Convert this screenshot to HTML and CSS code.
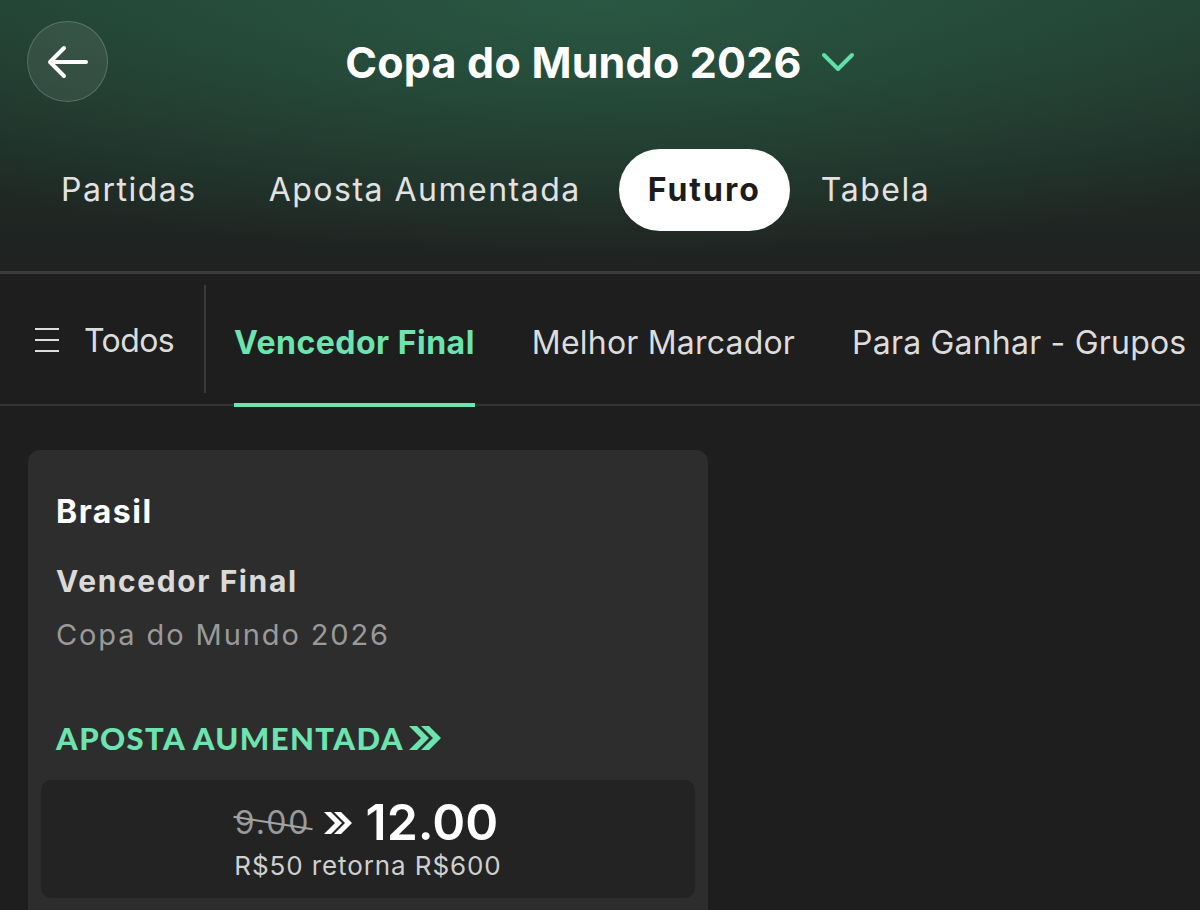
FILE: index.html
```html
<!DOCTYPE html>
<html lang="pt-BR">
<head>
    <meta charset="UTF-8">
    <meta name="viewport" content="width=device-width, initial-scale=1.0">
    <title>Copa do Mundo 2026</title>
    <link rel="stylesheet" href="styles.css">
</head>
<body>
    <header class="header">
        <div class="top-bar">
            <button class="back-btn" type="button" aria-label="Voltar">
                <svg width="42" height="36" viewBox="0 0 42 36" fill="none" stroke="#fff" stroke-width="4" stroke-linecap="round" stroke-linejoin="round">
                    <path d="M39 18H5"/>
                    <path d="M17 4L3 18l14 14"/>
                </svg>
            </button>
            <h1 class="title">
                Copa do Mundo 2026
                <svg class="title-chevron" width="34" height="22" viewBox="0 0 34 22" fill="none" stroke="#5fe0a8" stroke-width="4" stroke-linecap="round" stroke-linejoin="round">
                    <path d="M3 4l14 14L31 4"/>
                </svg>
            </h1>
        </div>
        <nav class="tabs">
            <span class="tab tab-first">Partidas</span>
            <span class="tab tab-second">Aposta Aumentada</span>
            <span class="tab active">Futuro</span>
            <span class="tab">Tabela</span>
        </nav>
    </header>

    <div class="subnav">
        <div class="subnav-all">
            <svg width="26" height="26" viewBox="0 0 26 26" fill="none" stroke="#ddd" stroke-width="2.2">
                <path d="M1 2h24M1 13h24M1 24h24"/>
            </svg>
            <span>Todos</span>
        </div>
        <div class="subnav-sep"></div>
        <span class="subnav-item active">Vencedor Final</span>
        <span class="subnav-item">Melhor Marcador</span>
        <span class="subnav-item">Para Ganhar - Grupos</span>
    </div>

    <main class="content">
        <div class="card">
            <div class="team">Brasil</div>
            <div class="market">Vencedor Final</div>
            <div class="competition">Copa do Mundo 2026</div>
            <div class="boost-label">
                APOSTA AUMENTADA
                <svg width="34" height="26" viewBox="0 0 34 26" fill="#6de4b0">
                    <path d="M1 1h8l12 12L9 25H1l12-12z"/>
                    <path d="M13 1h8l12 12-12 12h-8l12-12z"/>
                </svg>
            </div>
            <div class="price-box">
                <div class="price-line">
                    <span class="old-price">9.00</span>
                    <svg class="price-arrow" width="30" height="26" viewBox="0 0 30 26" fill="#fff">
                        <path d="M1 2h7l11 11L8 24H1l11-11z"/>
                        <path d="M11 2h7l11 11-11 11h-7l11-11z"/>
                    </svg>
                    <span class="new-price">12.00</span>
                </div>
                <div class="returns">R$50 retorna R$600</div>
            </div>
        </div>
    </main>
</body>
</html>
```

FILE: styles.css
```css
body {
    margin: 0;
    font-family: Inter, Roboto, "Noto Sans", sans-serif;
    background-color: #1e1e1e;
    color: #fff;
    overflow: hidden;
}

/* cabeçalho verde */
.header {
    background:
        radial-gradient(ellipse 900px 260px at 600px 0, rgba(42, 92, 70, 0.85), rgba(42, 92, 70, 0) 100%),
        linear-gradient(180deg, #223d31 0%, #1f2c26 60%, #1f2120 100%);
    border-bottom: 3px solid #3a3a3a;
    height: 274px;
    box-sizing: border-box;
}
.top-bar {
    position: relative;
    height: 122px;
    display: flex;
    align-items: center;
    justify-content: center;
}
.back-btn {
    position: absolute;
    left: 27px;
    top: 21px;
    width: 81px;
    height: 81px;
    border-radius: 50%;
    background-color: rgba(255, 255, 255, 0.08);
    border: 1.5px solid rgba(255, 255, 255, 0.18);
    display: flex;
    align-items: center;
    justify-content: center;
    padding: 0;
}
.title {
    margin: 0;
    font-size: 43px;
    font-weight: 700;
    display: flex;
    align-items: center;
    gap: 19px;
    letter-spacing: 0.2px;
    padding-top: 2px;
}
.tabs {
    display: flex;
    align-items: center;
    padding-left: 61px;
    margin-top: 27px;
    white-space: nowrap;
}
.tab {
    font-size: 32px;
    color: #e2e2e2;
    height: 82px;
    line-height: 82px;
    border-radius: 41px;
    letter-spacing: 1.5px;
}
.tab-first {
    margin-right: 72px;
}
.tab-second {
    margin-right: 38px;
}
.tab.active {
    background-color: #fff;
    color: #1c1c1c;
    font-weight: 700;
    padding: 0 29px;
    margin-right: 31px;
    letter-spacing: 2px;
}

/* filtros */
.subnav {
    display: flex;
    align-items: center;
    height: 132px;
    border-bottom: 2px solid #343434;
    background-color: #1e1e1e;
    box-sizing: border-box;
    white-space: nowrap;
}
.subnav-all {
    display: flex;
    align-items: center;
    flex-shrink: 0;
    gap: 24px;
    padding-left: 34px;
    font-size: 32px;
    color: #dcdcdc;
    width: 170px;
    letter-spacing: -0.6px;
    padding-top: 2px;
}
.subnav-sep {
    flex-shrink: 0;
    width: 2px;
    height: 108px;
    background-color: #3a3a3a;
    margin-right: 28px;
}
.subnav-item {
    flex-shrink: 0;
    font-size: 32px;
    color: #dcdcdc;
    height: 132px;
    line-height: 140px;
    margin-right: 57px;
    box-sizing: border-box;
    letter-spacing: 0.2px;
}
.subnav-item.active {
    color: #6de4b0;
    font-weight: 700;
    border-bottom: 4px solid #6de4b0;
    margin-bottom: -2px;
    height: 134px;
    letter-spacing: 0.5px;
}

/* cartão */
.content {
    padding: 44px 28px 0;
}
.card {
    width: 680px;
    background-color: #2d2d2d;
    border-radius: 12px;
    padding: 42px 28px 40px;
    box-sizing: border-box;
}
.team {
    font-size: 32px;
    font-weight: 700;
    line-height: 40px;
    letter-spacing: 1.5px;
}
.market {
    font-size: 30px;
    font-weight: 700;
    color: #dadada;
    line-height: 40px;
    margin-top: 29px;
    letter-spacing: 1.6px;
}
.competition {
    font-size: 29px;
    color: #9a9a9a;
    line-height: 40px;
    margin-top: 14px;
    letter-spacing: 1.9px;
}
.boost-label {
    font-family: Lato, "Open Sans", sans-serif;
    font-weight: 900;
    font-size: 31px;
    color: #6de4b0;
    line-height: 40px;
    margin-top: 63px;
    display: flex;
    align-items: center;
    gap: 4px;
    letter-spacing: 1.4px;
}
.price-box {
    margin: 22px -15px 0;
    background-color: #232323;
    border-radius: 10px;
    height: 118px;
    display: flex;
    flex-direction: column;
    align-items: center;
    padding-top: 17px;
    box-sizing: border-box;
}
.price-line {
    display: flex;
    align-items: center;
    height: 50px;
    margin-left: -3px;
}
.old-price {
    position: relative;
    font-size: 32px;
    color: #9a9a9a;
    letter-spacing: 2px;
}
/* risco inclinado sobre a odd antiga */
.old-price::after {
    content: "";
    position: absolute;
    left: -2px;
    right: -2px;
    top: 50%;
    height: 2px;
    background-color: #a5a5a5;
    transform: rotate(9deg);
}
.price-arrow {
    margin: 2px 13px 0 12px;
}
.new-price {
    font-size: 50px;
    font-weight: 600;
}
.returns {
    font-size: 26px;
    color: #cfcfcf;
    line-height: 30px;
    margin-top: 4px;
    letter-spacing: 0.9px;
}
```
